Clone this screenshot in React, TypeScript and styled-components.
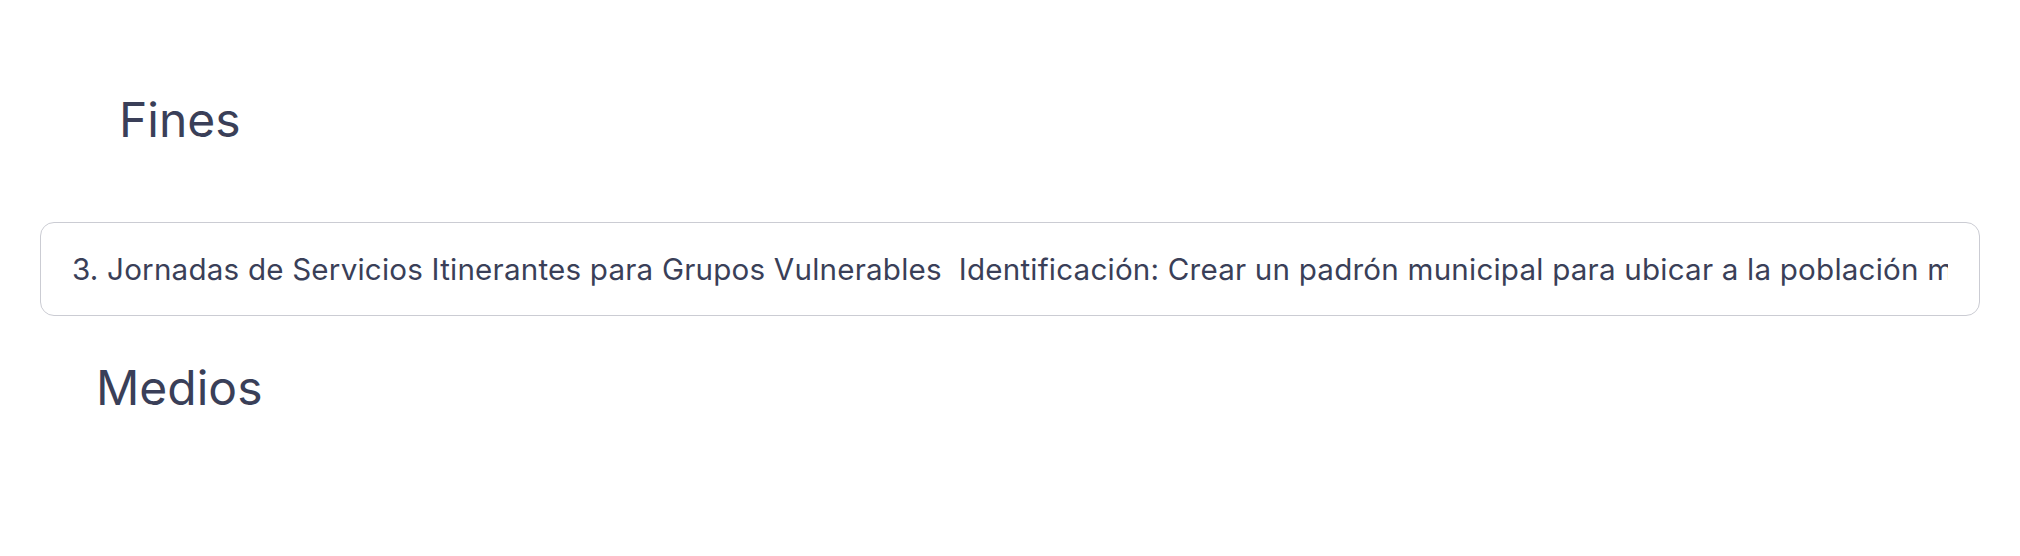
import React from "react";
import styled, { createGlobalStyle } from "styled-components";

const GlobalStyle = createGlobalStyle`
  html, body {
    margin: 0;
    padding: 0;
    background: #ffffff;
  }
  body {
    font-family: Inter, "Noto Sans", "Liberation Sans", sans-serif;
    color: #3a3f58;
  }
`;

const Page = styled.main`
  display: flex;
  flex-direction: column;
  padding: 0 40px;
`;

const SectionTitle = styled.h2<{ $indent: number; $top: number }>`
  margin: ${(p) => p.$top}px 0 0 ${(p) => p.$indent}px;
  font-family: Inter, "Noto Sans", sans-serif;
  font-size: 48px;
  line-height: 48px;
  font-weight: 400;
  color: #3a3f58;
`;

const FieldInput = styled.input`
  box-sizing: border-box;
  width: 100%;
  height: 94px;
  margin-top: 78px;
  padding: 0 31px;
  border: 1px solid #cbccd3;
  border-radius: 14px;
  background: #ffffff;
  font-family: Inter, "Noto Sans", sans-serif;
  font-size: 29.6px;
  letter-spacing: 0.2px;
  color: #3a3f58;
  outline: none;
`;

const text =
  "3. Jornadas de Servicios Itinerantes para Grupos Vulnerables  Identificación: Crear un padrón municipal para ubicar a la población mayor, personas con discapacidad y familias en situación de vulnerabilidad.";

export default function App() {
  return (
    <>
      <GlobalStyle />
      <Page>
        <SectionTitle $indent={79} $top={96}>
          Fines
        </SectionTitle>
        <FieldInput readOnly value={text} />
        <SectionTitle $indent={56} $top={48}>
          Medios
        </SectionTitle>
      </Page>
    </>
  );
}
